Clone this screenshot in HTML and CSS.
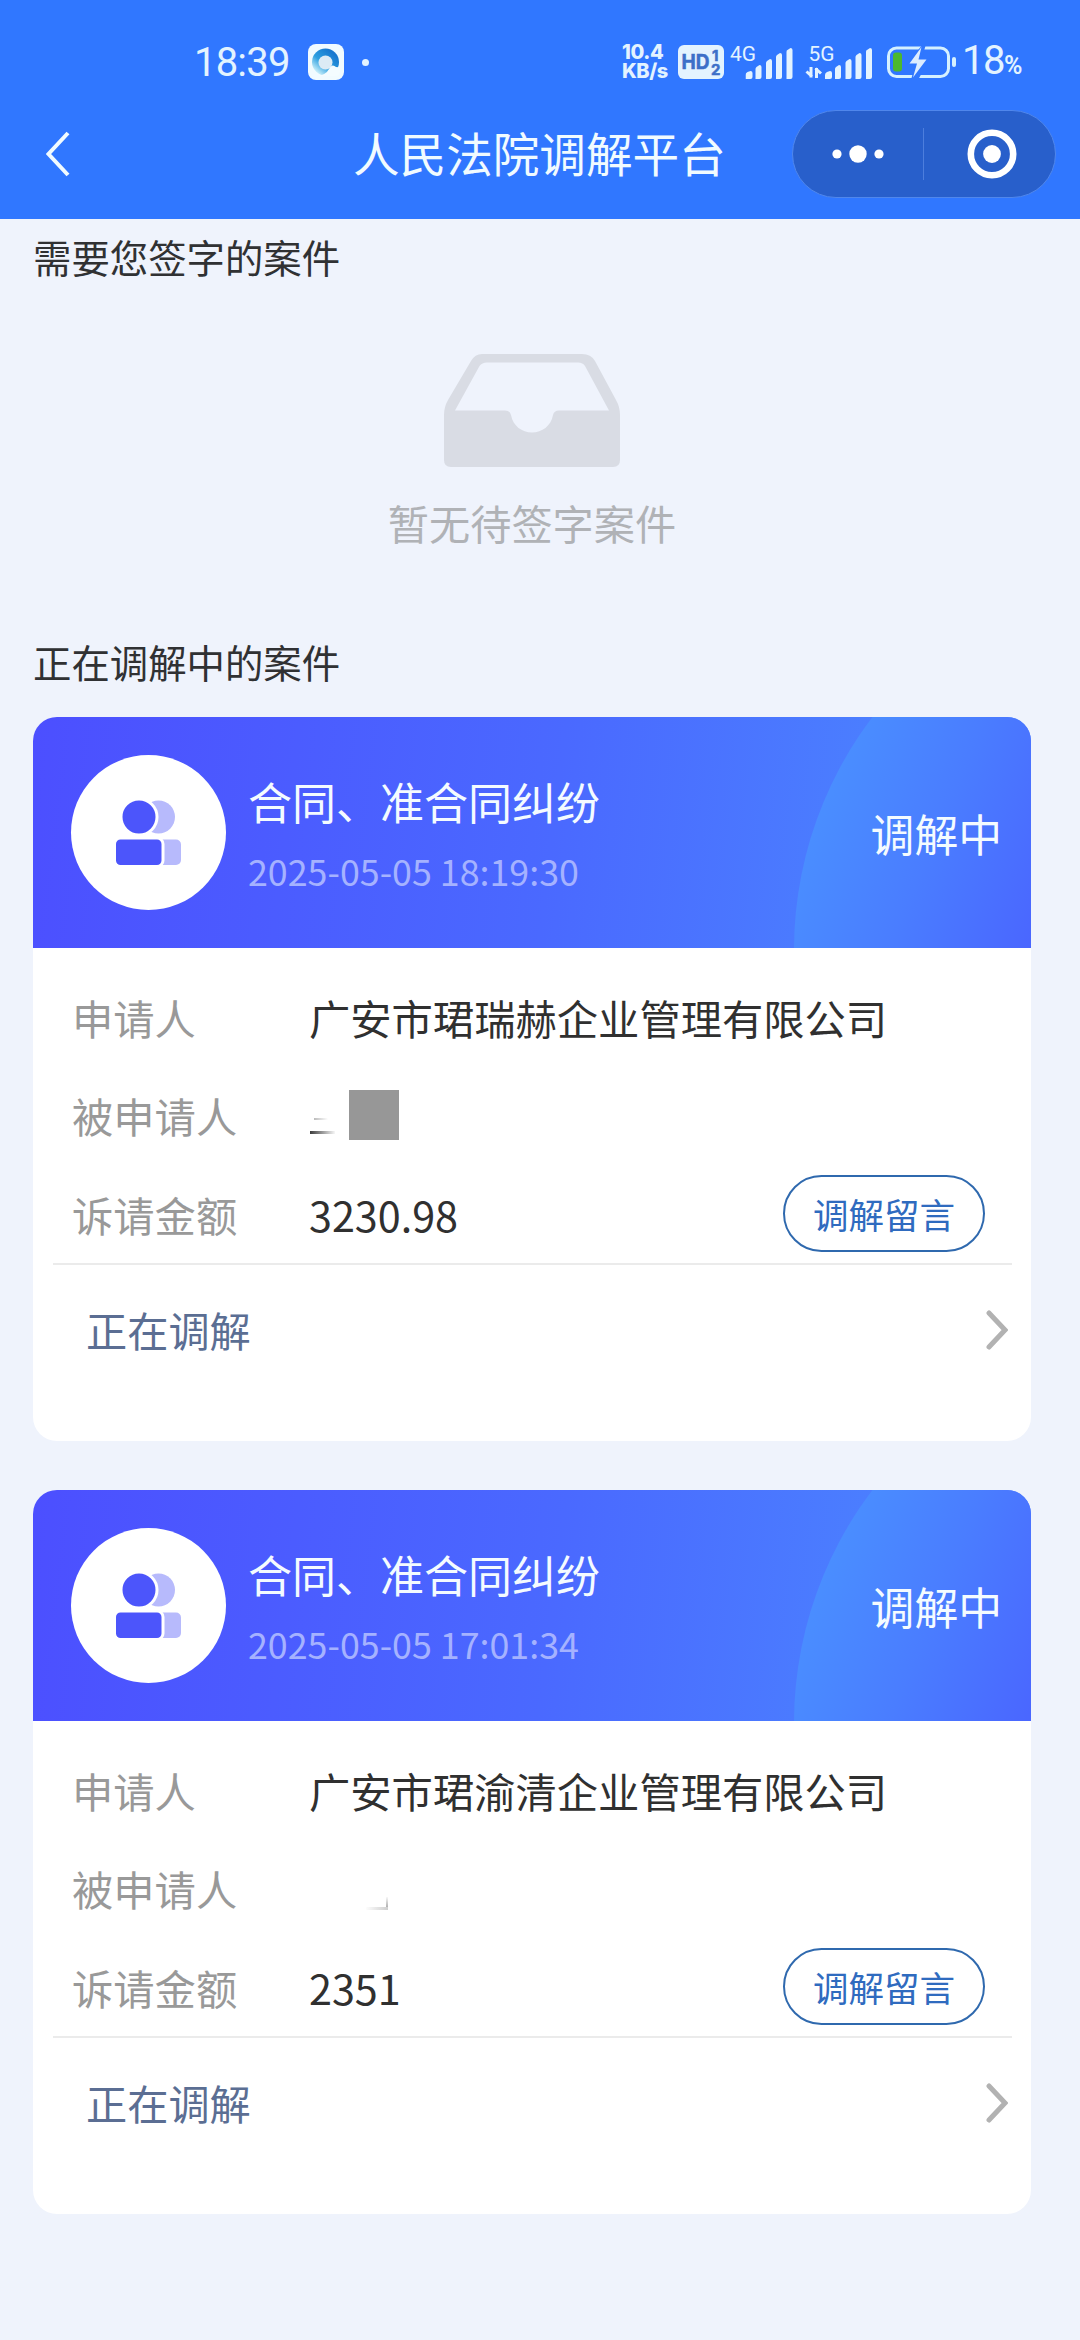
FILE: index.html
```html
<!DOCTYPE html>
<html lang="zh-CN">
<head>
<meta charset="utf-8">
<title>人民法院调解平台</title>
<link rel="stylesheet" href="styles.css">
</head>
<body>
<svg class="defs" width="0" height="0" aria-hidden="true">
  <defs>
    <linearGradient id="orb" x1="794" y1="830" x2="1040" y2="930" gradientUnits="userSpaceOnUse" gradientTransform="translate(-33 -717)">
      <stop offset="0" stop-color="#4a90ff"/>
      <stop offset="0.5" stop-color="#4a7dff"/>
      <stop offset="1" stop-color="#4a66ff"/>
    </linearGradient>
    <symbol id="people" viewBox="0 0 66 66">
      <circle cx="42.500" cy="17" r="16.500" fill="#b7bafc"/>
      <rect x="24" y="39.500" width="41" height="25.500" rx="5" fill="#b7bafc"/>
      <circle cx="23" cy="17" r="18" fill="#4c55fb" stroke="#fff" stroke-width="3"/>
      <rect x="-1.500" y="38" width="48.500" height="28.500" rx="6" fill="#4c55fb" stroke="#fff" stroke-width="3"/>
    </symbol>
    <symbol id="bars" viewBox="0 0 48 31">
      <path d="M0 31v-4q0-2 2-3l3-1q2 0 2 2v4q0 2-2 2zM10 31V21q0-1 1-2l3-2q2 0 2 2v10q0 2-2 2zM20.500 31V15q0-1 1-2l3-2q2 0 2 2v16q0 2-2 2zM30.500 31V9q0-1 1-2l3-2q2 0 2 2v22q0 2-2 2zM41 31V4q0-2 1-2l3-2q2 0 2 2v27q0 2-2 2z" fill="#e3f3ff"/>
    </symbol>
  </defs>
</svg>

<header class="header">
  <div class="status">
    <span class="clock">18:39</span>
    <svg class="app" viewBox="0 0 36 36">
      <defs>
        <linearGradient id="ring" x1="0.800" y1="0.200" x2="0.200" y2="0.900">
          <stop offset="0" stop-color="#1878cf"/><stop offset="0.550" stop-color="#2c9fe0"/><stop offset="1" stop-color="#c9effa"/>
        </linearGradient>
      </defs>
      <rect width="36" height="36" rx="8" fill="#f1fbff"/>
      <circle cx="17.500" cy="18" r="13.500" fill="url(#ring)"/>
      <circle cx="17.500" cy="18.500" r="7" fill="#dcebf5"/>
      <path d="M9 32q9-1 12-7 3-6 7-2 5 0 4 5-1 4-6 4z" fill="#f4fcff"/>
    </svg>
    <i class="dot"></i>
    <div class="speed"><span>10.4</span><span>KB/s</span></div>
    <svg class="hd" viewBox="0 0 46 34">
      <rect width="46" height="34" rx="6" fill="#e3f3ff"/>
      <g fill="#3c6fc8" stroke="#3c6fc8" stroke-width="0.500" font-family="Inter, sans-serif" font-weight="700">
        <text x="3.500" y="24" font-size="19.500" textLength="28" lengthAdjust="spacingAndGlyphs">HD</text>
        <text x="34" y="15.500" font-size="15">1</text>
        <text x="33" y="30" font-size="15">2</text>
      </g>
    </svg>
    <svg class="signal" viewBox="0 0 64 34">
      <text x="0" y="15.500" font-family="Roboto, sans-serif" font-size="21" textLength="26" lengthAdjust="spacingAndGlyphs" fill="#e3f3ff">4G</text>
      <use href="#bars" x="15.500" y="3" width="48" height="31"/>
    </svg>
    <svg class="signal signal-5g" viewBox="0 0 68 34">
      <text x="3.500" y="15.500" font-family="Roboto, sans-serif" font-size="21" textLength="26" lengthAdjust="spacingAndGlyphs" fill="#e3f3ff">5G</text>
      <path d="M6 22v10.500M7 31.500l-5.500-5M11.500 33V23M10.500 23.500l5.500 5" fill="none" stroke="#e3f3ff" stroke-width="3"/>
      <use href="#bars" x="20" y="3" width="48" height="31"/>
    </svg>
    <svg class="battery" viewBox="0 0 70 36">
      <rect x="1.500" y="4" width="60" height="28.500" rx="8" fill="none" stroke="#d5f1ff" stroke-width="3"/>
      <rect x="6" y="8.500" width="9" height="19" rx="3" fill="#4cb82e"/>
      <path d="M36 0 19 21h9l-4 15h7L43 14h-8L39 0z" fill="#3077ff"/>
      <path d="M34.500 3 22.500 19.500h7.500L26 33.500 39.500 15.500h-8L34.500 3z" fill="#dcecff"/>
      <rect x="65" y="13" width="4" height="10" rx="2" fill="#d5f1ff"/>
    </svg>
    <span class="level">18<small>%</small></span>
  </div>

  <nav class="nav">
    <svg class="back" viewBox="0 0 24 46"><path d="M22 2 2.500 23 22 44" fill="none" stroke="#f1fbff" stroke-width="4"/></svg>
    <h1 class="title">人民法院调解平台</h1>
    <div class="capsule">
      <svg class="more" viewBox="0 0 52 18"><circle cx="5" cy="9" r="4.600"/><circle cx="26" cy="9" r="8.700"/><circle cx="47" cy="9" r="4.600"/></svg>
      <i class="split"></i>
      <svg class="close" viewBox="0 0 50 50"><circle cx="25" cy="25" r="21.200" fill="none" stroke="#fff" stroke-width="6.600"/><circle cx="25" cy="25" r="8.900"/></svg>
    </div>
  </nav>
</header>

<main class="page">
  <h2 class="section">需要您签字的案件</h2>
  <div class="empty">
    <svg class="tray" viewBox="0 0 176 113">
      <path fill-rule="evenodd" fill="#d9dce4" d="M38 0H138Q147 0 151 7L172 46Q176 53 176 61V106Q176 113 169 113H7Q0 113 0 106V61Q0 53 4 46L27 7Q31 0 38 0ZM43 8.500Q38 8.500 35.500 12L11 56.500H61Q66 56.500 67 61C69 72 78 78.500 88 78.500S107 72 109 61Q110 56.500 115 56.500H165L141 12Q139 8.500 134 8.500Z"/>
    </svg>
    <p class="empty-text">暂无待签字案件</p>
  </div>
  <h2 class="section">正在调解中的案件</h2>

  <article class="card">
    <div class="card-head">
      <svg class="arc" viewBox="0 0 998 231"><circle cx="1146" cy="233" r="385" fill="url(#orb)"/></svg>
      <div class="avatar"><svg class="people"><use href="#people"/></svg></div>
      <div class="summary">
        <h3 class="cause">合同、准合同纠纷</h3>
        <time class="date">2025-05-05 18:19:30</time>
      </div>
      <span class="state">调解中</span>
    </div>
    <dl class="rows">
      <div class="row"><dt>申请人</dt><dd>广安市珺瑞赫企业管理有限公司</dd></div>
      <div class="row"><dt>被申请人</dt><dd class="masked"><i class="trace"></i><i class="block"></i></dd></div>
      <div class="row"><dt>诉请金额</dt><dd class="amount">3230.98</dd><button class="message">调解留言</button></div>
    </dl>
    <div class="progress">
      <span>正在调解</span>
      <svg class="chevron" viewBox="0 0 22 40"><path d="M3 3 19 20 3 37" fill="none" stroke="#b2b2b2" stroke-width="5" stroke-linecap="round"/></svg>
    </div>
  </article>

  <article class="card">
    <div class="card-head">
      <svg class="arc" viewBox="0 0 998 231"><circle cx="1146" cy="233" r="385" fill="url(#orb)"/></svg>
      <div class="avatar"><svg class="people"><use href="#people"/></svg></div>
      <div class="summary">
        <h3 class="cause">合同、准合同纠纷</h3>
        <time class="date">2025-05-05 17:01:34</time>
      </div>
      <span class="state">调解中</span>
    </div>
    <dl class="rows">
      <div class="row"><dt>申请人</dt><dd>广安市珺渝清企业管理有限公司</dd></div>
      <div class="row"><dt>被申请人</dt><dd class="masked"><i class="trace trace-faint"></i></dd></div>
      <div class="row"><dt>诉请金额</dt><dd class="amount">2351</dd><button class="message">调解留言</button></div>
    </dl>
    <div class="progress">
      <span>正在调解</span>
      <svg class="chevron" viewBox="0 0 22 40"><path d="M3 3 19 20 3 37" fill="none" stroke="#b2b2b2" stroke-width="5" stroke-linecap="round"/></svg>
    </div>
  </article>
</main>
</body>
</html>
```

FILE: styles.css
```css
* { box-sizing: border-box; margin: 0; padding: 0; }

body {
  width: 1080px;
  height: 2340px;
  overflow: hidden;
  background: #eff3fc;
  color: #303133;
  font-family: "Noto Sans CJK SC", sans-serif;
}

svg { display: block; flex: none; }
.defs { position: absolute; }

/* header */
.header { height: 219px; background: #3077ff; color: #f1fbff; }

.status {
  display: flex;
  align-items: center;
  height: 110px;
  padding: 14px 0 0 194px;
}
.clock {
  width: 114px;
  padding-top: 2px;
  font: 400 40px/48px Roboto, sans-serif;
  letter-spacing: -0.800px;
  color: #e3f3ff;
}
.app { width: 36px; height: 36px; }
.dot { width: 7px; height: 7px; margin-left: 18px; border-radius: 50%; background: #e3f3ff; }
.speed {
  display: flex;
  flex-direction: column;
  width: 56px;
  margin-left: 253px;
  font: 800 20px/19px Inter, sans-serif;
  letter-spacing: -0.400px;
  color: #e3f3ff;
}
.hd { width: 46px; height: 34px; }
.signal { width: 64px; height: 34px; margin-left: 6px; overflow: visible; }
.signal-5g { width: 68px; margin-left: 11px; }
.battery { width: 70px; height: 36px; margin-left: 14px; }
.level {
  margin-left: 5px;
  padding-top: 2px;
  font: 400 40px/48px Roboto, sans-serif;
  letter-spacing: -1.500px;
  color: #e3f3ff;
  white-space: nowrap;
}
.level small { font-size: 25px; font-weight: 600; }

.nav { display: flex; align-items: center; height: 88px; padding: 0 24px 0 46px; }
.back { width: 24px; height: 46px; }
.title {
  margin-left: 283px;
  font-size: 46.600px;
  font-weight: 400;
  line-height: 60px;
  padding-bottom: 4px;
}
.capsule {
  display: flex;
  align-items: center;
  width: 264px;
  height: 88px;
  margin-left: auto;
  padding: 0 38px 0 39px;
  border: 1px solid #5087ec;
  border-radius: 44px;
  background: #285fcb;
  fill: #fff;
}
.more { width: 52px; height: 18px; }
.split { width: 1px; height: 52px; margin-left: 39px; background: #4d7edd; }
.close { width: 50px; height: 50px; margin-left: auto; }

/* page */
.page { padding: 0 49px 0 33px; }
.section {
  height: 74px;
  font-size: 38.400px;
  font-weight: 400;
  line-height: 74px;
}
.empty {
  display: flex;
  flex-direction: column;
  align-items: center;
  height: 331px;
  padding-top: 61px;
}
.tray { width: 176px; height: 113px; }
.empty-text { margin-top: 25px; font-size: 41.200px; line-height: 60px; color: #b0b2b6; }

/* case card */
.card {
  height: 724px;
  margin-top: 19px;
  border-radius: 24px;
  overflow: hidden;
  background: #fff;
}
.card + .card { margin-top: 49px; }
.card-head {
  position: relative;
  display: flex;
  align-items: center;
  height: 231px;
  padding: 0 29px 0 38px;
  background: linear-gradient(97deg, #4c4fff 0%, #4a69ff 52%, #4b82ff 88%);
  color: #f4fbff;
}
.arc { position: absolute; inset: 0; width: 998px; height: 231px; }
.avatar {
  display: flex;
  align-items: center;
  justify-content: center;
  width: 155px;
  height: 155px;
  border-radius: 50%;
  background: #fff;
}
.people { width: 66px; height: 66px; }
.summary { margin: 0 auto 0 22px; padding-top: 5px; }
.cause { font-size: 44px; font-weight: 400; line-height: 70px; }
.date { display: block; font-size: 35.800px; line-height: 68px; color: #a5b2ff; }
.state { position: relative; font-size: 43.800px; line-height: 60px; }

.rows { margin: 0 19px 0 20px; padding-top: 20px; border-bottom: 2px solid #ebebeb; }
.row {
  display: flex;
  align-items: center;
  height: 98.300px;
  padding: 0 27px 0 19px;
  font-size: 41.300px;
  line-height: 60px;
}
.row dt { width: 237px; color: #999; }
.row dd { color: #303030; }
.masked { display: flex; align-items: center; }
.trace {
  width: 25px;
  height: 16px;
  margin: 22px 14px 0 1px;
  border-bottom: 3px solid;
  border-image: linear-gradient(90deg, #333, #fff) 1;
  background: linear-gradient(90deg, #bbb, #fff) 4px 0 / 14px 2px no-repeat;
}
.trace-faint {
  width: 22px;
  height: 13px;
  margin: 30px 0 0 57px;
  border-bottom-width: 3px;
  border-image: linear-gradient(90deg, #fff, #ccc) 1;
  background: linear-gradient(#fff, #aaa) right / 2px 12px no-repeat;
}
.block { width: 50px; height: 50px; background: #979797; }
.message {
  width: 202px;
  height: 77px;
  margin: 0 0 0 auto;
  border: 2px solid #2f69ae;
  border-radius: 39px;
  background: #fff;
  color: #2f6bbf;
  font: 35.500px/60px "Noto Sans CJK SC", sans-serif;
}
.progress {
  display: flex;
  align-items: center;
  justify-content: space-between;
  height: 130px;
  padding: 0 23px 0 53px;
  font-size: 41.200px;
  line-height: 60px;
  color: #5b6e93;
}
.progress span { padding-bottom: 2px; }
.chevron { width: 22px; height: 40px; }
```
